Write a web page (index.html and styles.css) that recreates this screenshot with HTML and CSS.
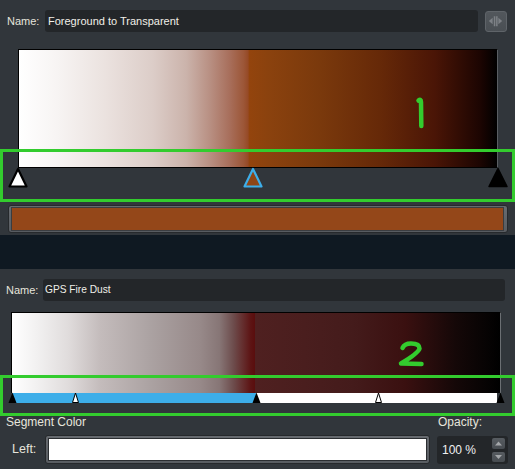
FILE: index.html
```html
<!DOCTYPE html>
<html>
<head>
<meta charset="utf-8">
<link rel="stylesheet" href="styles.css">
</head>
<body>
<section class="panel panel-top">
  <div class="name-row">
    <span class="label name-label">Name:</span>
    <div class="text-field">Foreground to Transparent</div>
    <div class="icon-btn">
      <svg width="22" height="21" viewBox="0 0 22 21">
        <polygon points="4,10 8,6.5 8,13.5" fill="#7d8186"/>
        <rect x="9.2" y="5" width="1.6" height="10.5" fill="#7d8186"/>
        <rect x="11.6" y="5" width="1.6" height="10.5" fill="#7d8186"/>
        <polygon points="18,10 14,6.5 14,13.5" fill="#7d8186"/>
      </svg>
    </div>
  </div>
  <div class="grad grad-1"></div>
  <div class="stops stops-1">
    <svg class="stop-big" style="left:8px" width="20" height="21" viewBox="0 0 20 21"><polygon points="10,2 18.5,19.5 1.5,19.5" fill="#fff" stroke="#000" stroke-width="2.2" stroke-linejoin="round"/></svg>
    <svg class="stop-big" style="left:243px" width="20" height="21" viewBox="0 0 20 21"><polygon points="10,2 18.5,19.5 1.5,19.5" fill="#8e4616" stroke="#3daee9" stroke-width="2.2" stroke-linejoin="round"/></svg>
    <svg class="stop-big" style="left:488px" width="20" height="21" viewBox="0 0 20 21"><polygon points="10,1.5 19,19.5 1,19.5" fill="#000" stroke="#000" stroke-width="1.5" stroke-linejoin="round"/></svg>
  </div>
  <div class="colorbar"><div class="swatch"></div></div>
</section>
<div class="strip"></div>
<section class="panel panel-bottom">
  <div class="name-row">
    <span class="label name-label">Name:</span>
    <div class="text-field small">GPS Fire Dust</div>
  </div>
  <div class="grad grad-2"></div>
  <div class="segbar">
    <svg class="stop-small" style="left:-4px" width="9" height="12" viewBox="0 0 9 12"><polygon points="4.5,0.5 8.5,11 0.5,11" fill="#000"/></svg>
    <svg class="stop-small" style="left:59px" width="9" height="12" viewBox="0 0 9 12"><polygon points="4.5,1 7.5,10.5 1.5,10.5" fill="#fff" stroke="#000" stroke-width="1"/></svg>
    <svg class="stop-small" style="left:240px" width="9" height="12" viewBox="0 0 9 12"><polygon points="4.5,0.5 8.5,11 0.5,11" fill="#000"/></svg>
    <svg class="stop-small" style="left:362px" width="9" height="12" viewBox="0 0 9 12"><polygon points="4.5,1 7.5,10.5 1.5,10.5" fill="#fff" stroke="#000" stroke-width="1"/></svg>
    <svg class="stop-small" style="left:484px" width="9" height="12" viewBox="0 0 9 12"><polygon points="4.5,0.5 8.5,11 0.5,11" fill="#000"/></svg>
  </div>
  <div class="seg-head">
    <span>Segment Color</span>
    <span class="opacity-label">Opacity:</span>
  </div>
  <div class="field-row">
    <span class="label left-label">Left:</span>
    <div class="color-field"><div class="color-inner"></div></div>
    <div class="spin">
      <span class="spin-value">100 %</span>
      <div class="spin-btns">
        <div class="spin-btn"><svg width="13" height="11" viewBox="0 0 13 11"><polygon points="6.5,3.5 10,7.5 3,7.5" fill="#a3a6a9"/></svg></div>
        <div class="spin-btn"><svg width="13" height="10" viewBox="0 0 13 10"><polygon points="6.5,7 10,3 3,3" fill="#a3a6a9"/></svg></div>
      </div>
    </div>
  </div>
</section>
<svg class="annot" width="515" height="469" viewBox="0 0 515 469">
  <rect x="1.5" y="150.5" width="512" height="50" fill="none" stroke="#33cc2e" stroke-width="3"/>
  <rect x="1.5" y="376.5" width="512" height="38" fill="none" stroke="#33cc2e" stroke-width="3"/>
  <path d="M418.5 100.5 Q421 98.5 421 102 L421.3 126" fill="none" stroke="#33cc2e" stroke-width="4.5" stroke-linecap="round" stroke-linejoin="round"/>
  <path d="M402.5 348 Q404.5 343.5 411 343.5 Q419.5 343.5 419.5 348.5 Q418.5 353 401 363.5 L421.5 364" fill="none" stroke="#33cc2e" stroke-width="4.5" stroke-linecap="round" stroke-linejoin="round"/>
</svg>
</body>
</html>
```

FILE: styles.css
```css
html, body {
  margin: 0;
  padding: 0;
}

body {
  width: 515px;
  height: 469px;
  overflow: hidden;
  position: relative;
  background: #31363b;
  color: #eff0f1;
  font-family: "Liberation Sans", Arial, sans-serif;
}

.panel {
  box-sizing: border-box;
}

.panel-top {
  height: 235px;
  padding-top: 10px;
}

.name-row {
  display: flex;
  align-items: center;
  height: 22px;
}

.panel-top .name-row {
  padding-left: 7px;
}

.panel-bottom .name-row {
  padding-left: 6px;
}

.label {
  font-size: 11px;
  color: #e6e5dc;
}

.panel-top .name-label {
  width: 38px;
}

.panel-bottom .name-label {
  width: 37px;
}

.text-field {
  box-sizing: border-box;
  height: 22px;
  line-height: 22px;
  padding-left: 3px;
  background: #232629;
  border-radius: 3px;
  font-size: 11px;
  color: #f0efe8;
  white-space: nowrap;
}

.panel-top .text-field {
  width: 433px;
}

.panel-bottom .text-field {
  width: 462px;
  padding-left: 2px;
  font-size: 10.2px;
}

.icon-btn {
  box-sizing: border-box;
  margin-left: 7px;
  width: 22px;
  height: 21px;
  margin-top: 1px;
  border: 1px solid #5f6469;
  border-radius: 3px;
  background: linear-gradient(#52575c, #4a4f54);
  display: flex;
}

.icon-btn svg {
  margin: -1px 0 0 -1px;
}

.grad {
  box-sizing: content-box;
}

.grad-1 {
  margin: 17px 0 0 18px;
  width: 478px;
  height: 117px;
  border: 1px solid #000;
  border-right-color: #5a5e62;
  background: linear-gradient(to right,
    #ffffff 0%, #f7f4f3 8%, #ebe2df 18%, #dccdc8 28%, #cbb3ab 35%,
    #b88f82 40%, #a86f5c 44%, #9c5637 47%, #964a26 47.9%,
    #93440d 48.2%, #8b420e 52%, #7a390c 63%, #652808 76%,
    #4a1506 87%, #1c0502 96.5%, #000000 100%);
}

.stops {
  position: relative;
}

.stops-1 {
  height: 37px;
}

.stop-big {
  position: absolute;
  top: -1px;
  display: block;
}

.colorbar {
  box-sizing: border-box;
  margin-left: 8px;
  width: 500px;
  height: 28px;
  padding: 1px 3px 1px 2px;
  border: 1px solid #26292c;
  border-radius: 3px;
  background: linear-gradient(#676b70, #585c61);
}

.swatch {
  box-sizing: border-box;
  height: 100%;
  border: 1px solid #3a3d41;
  background: #944719;
}

.strip {
  height: 34px;
  background: #0f1922;
}

.panel-bottom {
  padding-top: 10px;
}

.grad-2 {
  margin: 11px 0 0 11px;
  width: 488px;
  height: 80px;
  border-top: 1px solid #000;
  border-left: 1px solid #000;
  border-right: 1px solid #6b6f73;
  background: linear-gradient(to right,
    #ffffff 0%, #f2f1f1 5%, #e0dcdc 11.5%, #c4bcbc 18%, #aba2a2 28.4%,
    #978989 38.6%, #877676 42.5%, #6d4c4c 45.4%, #5d1414 48.9%,
    #5a0e0e 49.7%, #4f2020 49.9%, #4a1e1e 60%, #441b1b 70%,
    #3a1010 80.6%, #150808 90.8%, #060303 97.5%, #000000 100%);
}

.segbar {
  position: relative;
  margin-left: 12px;
  width: 485px;
  height: 10px;
  background: linear-gradient(to right, #3daee9 0 244px, #ffffff 244px);
}

.stop-small {
  position: absolute;
  top: -1px;
  display: block;
}

.seg-head {
  display: flex;
  margin-top: 12px;
  padding-left: 6px;
  height: 14px;
  line-height: 14px;
  font-size: 12px;
  color: #e6e5dc;
}

.opacity-label {
  margin-left: auto;
  width: 77px;
}

.field-row {
  display: flex;
  align-items: flex-start;
  margin-top: 6px;
  height: 29px;
}

.left-label {
  box-sizing: border-box;
  width: 45px;
  padding-left: 12px;
  font-size: 12.5px;
  line-height: 29px;
}

.color-field {
  box-sizing: border-box;
  width: 385px;
  height: 29px;
  padding: 2px;
  border: 1px solid #26292c;
  border-radius: 3px;
  background: linear-gradient(#676b70, #585c61);
}

.color-inner {
  box-sizing: border-box;
  height: 100%;
  border: 1px solid #2b2e31;
  background: #ffffff;
}

.spin {
  box-sizing: border-box;
  display: flex;
  align-items: center;
  margin: 1px 0 0 7px;
  width: 71px;
  height: 28px;
  background: #232629;
  border-radius: 3px;
}

.spin-value {
  padding-left: 5px;
  font-size: 12px;
  color: #eff0f1;
}

.spin-btns {
  margin-left: auto;
  margin-right: 3px;
  width: 13px;
  display: flex;
  flex-direction: column;
  gap: 3px;
}

.spin-btn {
  height: 11px;
  border-radius: 2px;
  background: linear-gradient(#575c61, #474c51);
  display: flex;
}

.spin-btn + .spin-btn {
  height: 10px;
}

.annot {
  position: absolute;
  left: 0;
  top: 0;
  pointer-events: none;
}
```
